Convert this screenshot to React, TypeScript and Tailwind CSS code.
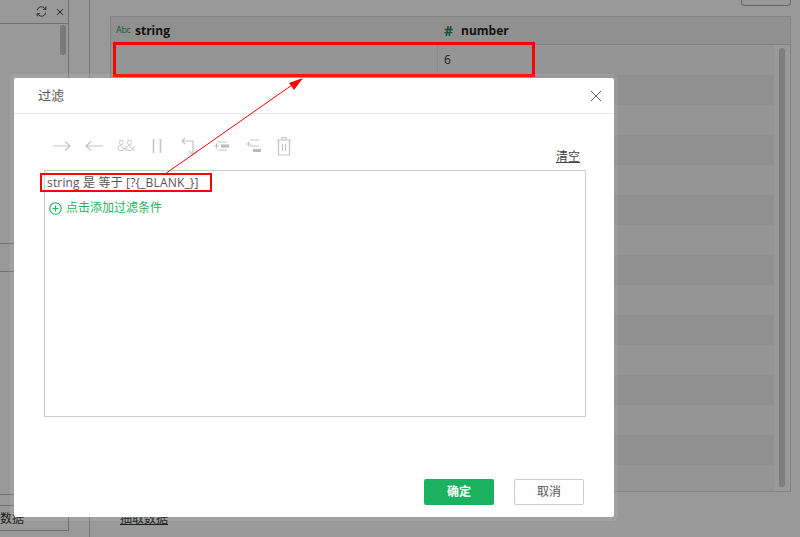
import React from "react";

const font = { fontFamily: '"Open Sans","Noto Sans CJK SC",sans-serif' };

function Tool({ w, children }: { w: number; children: React.ReactNode }) {
  return (
    <svg width={w} height="20" viewBox={`0 0 ${w} 20`} fill="none" stroke="#c4c4c4" strokeWidth="1.2" className="block shrink-0">
      {children}
    </svg>
  );
}

export default function App() {
  const rows = Array.from({ length: 15 });
  return (
    <div className="relative w-[800px] h-[537px] overflow-hidden bg-white text-[#333]" style={font}>
      {/* page underneath */}
      <div className="flex h-full">
        <div className="w-[69px] h-[531px] border-r border-b border-[#bbb] flex flex-col shrink-0">
          <div className="h-[24px] shrink-0 border-b border-[#bbb] flex items-center justify-end gap-[8px] pr-[4px]">
            <svg width="13" height="13" viewBox="0 0 24 24" fill="none" stroke="#444" strokeWidth="1.7">
              <path d="M4 10a8 8 0 0 1 14-4l2 2M20 14a8 8 0 0 1-14 4l-2-2" />
              <path d="M20 3v5h-5M4 21v-5h5" />
            </svg>
            <svg width="8" height="8" viewBox="0 0 8 8" stroke="#444" strokeWidth="1"><path d="M1 1l6 6M7 1L1 7" /></svg>
          </div>
          <div className="h-[220px] shrink-0 flex justify-end pr-[2px] pt-[1px] border-b border-[#bbb]">
            <div className="w-[6px] h-[30px] rounded bg-[#c8c8c8]" />
          </div>
          <div className="h-[28px] shrink-0 border-b border-[#bbb]" />
          <div className="h-[223px] shrink-0 border-b border-[#bbb]" />
          <div className="h-[11px] shrink-0 border-b border-[#bbb]" />
          <div className="flex-1 text-[12px] leading-[26px] whitespace-nowrap overflow-hidden">数据</div>
        </div>
        <div className="w-[21px] shrink-0 border-r border-[#ccc]" />
        <div className="flex-1 pl-[20px] pr-[9px] flex flex-col">
          <div className="h-[6px] flex justify-end">
            <div className="w-[50px] border border-t-0 border-[#aaa] rounded-b-sm" />
          </div>
          <div className="mt-[10px] h-[476px] border border-[#ddd] flex flex-col overflow-hidden">
            <div className="h-[28px] bg-[#f0f0f0] border-b border-[#d8d8d8] flex items-center text-[12px] font-bold text-[#222] shrink-0">
              <div className="w-[333px] flex items-center pl-[5px] gap-[5px]">
                <span className="w-[14px] text-[9px] font-normal text-[#1d9b5b] -mt-[3px] leading-none tracking-[-0.3px]">Abc</span>
                <span>string</span>
              </div>
              <div className="flex items-center gap-[8px]">
                <span className="text-[14px] text-[#1d8a5b] leading-none">#</span>
                <span>number</span>
              </div>
            </div>
            <div className="flex flex-1 overflow-hidden">
              <div className="w-[663px] flex flex-col">
                {rows.map((_, i) => (
                  <div key={i} className={`h-[30px] shrink-0 flex text-[12px] ${i % 2 === 0 ? "bg-[#f9f9f9]" : "bg-[#f0f0f0]"}`}>
                    <div className="w-[327px] border-r border-[#e8e8e8]" />
                    <div className="pl-[6px] leading-[30px]">{i === 0 ? "6" : ""}</div>
                  </div>
                ))}
              </div>
              <div className="flex-1 pl-[5px] pt-[3px]">
                <div className="w-[6px] h-[439px] rounded bg-[#d0d0d0]" />
              </div>
            </div>
          </div>
          <div className="mt-[20px] ml-[10px] text-[12px] underline leading-[14px]">抽取数据</div>
        </div>
      </div>

      {/* dim layer */}
      <div className="absolute inset-0 bg-black/40" />

      {/* red highlight on table row */}
      <div className="absolute left-[113px] top-[42px] w-[422px] h-[35px] border-[3px] border-[#f00]" />

      {/* dialog */}
      <div className="absolute left-[14px] top-[78px] w-[600px] h-[439px] bg-white rounded-[2px] shadow-[0_0_0_4px_rgba(255,255,255,0.08)] flex flex-col">
        <div className="h-[36px] border-b border-[#e8e8e8] flex items-center justify-between pl-[24px] pr-[12px] shrink-0">
          <span className="text-[13px] text-[#555] pt-[1px]">过滤</span>
          <svg width="12" height="12" viewBox="0 0 12 12" stroke="#666" strokeWidth="1" className="block">
            <path d="M1 1l10 10M11 1L1 11" />
          </svg>
        </div>
        <div className="flex-1 pl-[30px] pr-[28px] pt-[22px] flex flex-col">
          <div className="relative h-[34px] shrink-0">
            <div className="flex items-center">
              <div className="ml-[9px]"><Tool w={18}><path d="M0 10h17M12 5.500l5 4.500-5 4.500" /></Tool></div>
              <div className="ml-[14px]"><Tool w={18}><path d="M18 10H1M6 5.500L1 10l5 4.500" /></Tool></div>
              <div className="ml-[14px] w-[17px] text-[14px] leading-[20px] text-[#c4c4c4] tracking-[-1.8px] font-light">&amp;&amp;</div>
              <div className="ml-[18px]"><Tool w={11}><path d="M1.500 3v14M8.500 3v14" strokeWidth="1.500" /></Tool></div>
              <div className="ml-[17px]"><Tool w={18}><path d="M5 2L2 5l3 3M2 5h11v14M9 15l4 4 4-4" /></Tool></div>
              <div className="ml-[15px]">
                <Tool w={17}>
                  <path d="M1 10h5M3.500 7.500v5M5 6h9M5 14h9" />
                  <rect x="8" y="8.500" width="8" height="3" fill="#b8b8b8" stroke="none" />
                </Tool>
              </div>
              <div className="ml-[15px]">
                <Tool w={17}>
                  <path d="M1 8h5M3.500 5.500v5M5 4h9M5 10h9" />
                  <rect x="8" y="13" width="8" height="3" fill="#b8b8b8" stroke="none" />
                </Tool>
              </div>
              <div className="ml-[15px]">
                <Tool w={14}>
                  <path d="M1.500 4h11v15h-11zM0 4h14M5 4V1.500h4V4M5.500 8v7M8.500 8v7" />
                </Tool>
              </div>
            </div>
            <div className="absolute right-[6px] top-[13px] text-[12px] leading-[16px] underline text-[#444]">清空</div>
          </div>
          <div className="h-[247px] border border-[#ccc] shrink-0 px-[2px] pt-[2px]">
            <div className="text-[12px] leading-[20px] text-[#555] whitespace-nowrap tracking-[0.16px]">string 是 等于 [?{"{"}_BLANK_{"}"}]</div>
            <div className="mt-[6px] ml-[2px] flex items-center gap-[4px] text-[12px] leading-[18px] text-[#1fb25f]">
              <svg width="13" height="13" viewBox="0 0 13 13" fill="none" stroke="#1fb25f" strokeWidth="1.1" className="block">
                <circle cx="6.5" cy="6.5" r="5.7" />
                <path d="M6.5 3.5v6M3.5 6.5h6" />
              </svg>
              <span>点击添加过滤条件</span>
            </div>
          </div>
          <div className="flex justify-end gap-[20px] pr-[2px] mt-[62px]">
            <button className="w-[70px] h-[26px] rounded-[2px] bg-[#1bb25f] text-white text-[12px] font-semibold">确定</button>
            <button className="w-[70px] h-[26px] rounded-[2px] border border-[#ccc] bg-white text-[#555] text-[12px]">取消</button>
          </div>
        </div>
      </div>

      {/* annotations over the dialog */}
      <div className="absolute left-[40px] top-[173px] w-[172px] h-[19px] border-2 border-[#f00]" />
      <svg className="absolute left-0 top-0 pointer-events-none" width="800" height="537" fill="none">
        <path d="M165 174L292 85" stroke="#f00" strokeWidth="1" />
        <path d="M303 78L289 83L294 90Z" fill="#f00" />
      </svg>
    </div>
  );
}
